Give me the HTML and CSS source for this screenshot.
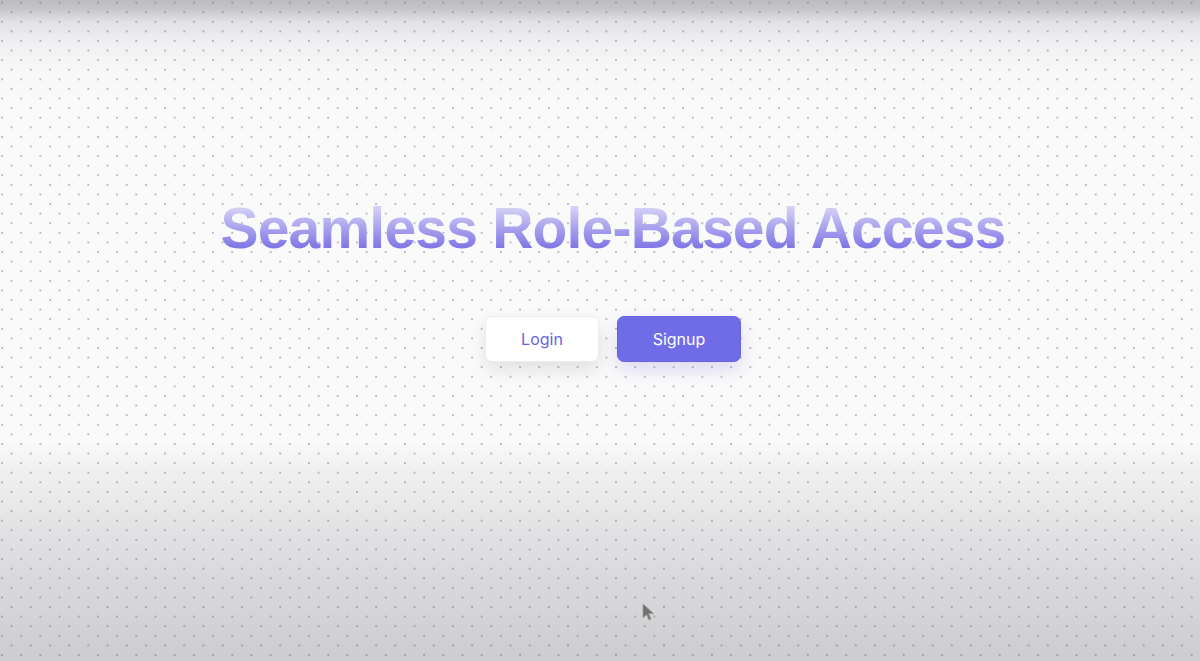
FILE: index.html
```html
<!DOCTYPE html>
<html lang="en">
<head>
<meta charset="utf-8">
<title>Seamless Role-Based Access</title>
<link rel="stylesheet" href="styles.css">
</head>
<body>
<main class="page">
  <section class="hero">
    <h1 class="title">Seamless Role-Based Access</h1>
    <div class="actions">
      <button class="btn btn-login">Login</button>
      <button class="btn btn-signup">Signup</button>
    </div>
  </section>
  <svg class="cursor" width="14" height="20" viewBox="0 0 14 20"><path d="M1 1 L1 15 L4.5 11.5 L7 17 L9 16 L6.6 10.6 L11.5 10.6 Z" fill="#707070" stroke="#9a9a9a" stroke-width="0.8" stroke-linejoin="round"/></svg>
</main>
</body>
</html>
```
FILE: styles.css
```css
html, body {
  margin: 0;
  padding: 0;
  height: 100%;
}
body {
  font-family: "Liberation Sans", Arial, sans-serif;
  overflow: hidden;
}
.page {
  position: relative;
  height: 661px;
  box-sizing: border-box;
  background-color: #fafafb;
  background-image:
    radial-gradient(circle, rgba(110,110,115,0.55) 0.6px, transparent 1px),
    radial-gradient(circle, rgba(110,110,115,0.55) 0.6px, transparent 1px),
    linear-gradient(to bottom, #bdbdbf 0px, #c4c4c6 8px, #e2e2e4 22px, #f1f1f3 45px, #f8f8f9 75px, #fafafb 110px, #fafafb 440px, #f0f0f1 470px, #e0e0e2 540px, #d6d6d8 600px, #cdcdcf 661px);
  background-size: 19.2px 19.2px, 19.2px 19.2px, 100% 100%;
  background-position: 2px 2.6px, 11.6px 12.2px, 0 0;
  display: flex;
  flex-direction: column;
  align-items: center;
  padding-top: 193px;
  padding-left: 26px;
}
.hero {
  display: flex;
  flex-direction: column;
  align-items: center;
}
.title {
  margin: 0;
  font-size: 57px;
  font-weight: 700;
  line-height: 70px;
  letter-spacing: -0.8px;
  background: linear-gradient(to bottom, #dcd9f5 16%, #a9a2ee 50%, #7a70e4 82%);
  -webkit-background-clip: text;
  background-clip: text;
  color: transparent;
}
.actions {
  display: flex;
  gap: 18px;
  margin-top: 53px;
}
.btn {
  height: 46px;
  border-radius: 7px;
  font-family: Inter, "Liberation Sans", sans-serif;
  font-size: 16px;
  cursor: pointer;
  box-sizing: border-box;
}
.btn-login {
  width: 114px;
  background: #ffffff;
  color: #6a63df;
  border: 1px solid #ececee;
  box-shadow: 0 8px 18px rgba(0,0,0,0.10);
}
.btn-signup {
  width: 124px;
  background: #706be7;
  color: #ffffff;
  border: 1px solid #6863e0;
  box-shadow: 0 8px 18px rgba(90,80,200,0.18);
}
.cursor {
  position: absolute;
  left: 642px;
  top: 603px;
}
```
